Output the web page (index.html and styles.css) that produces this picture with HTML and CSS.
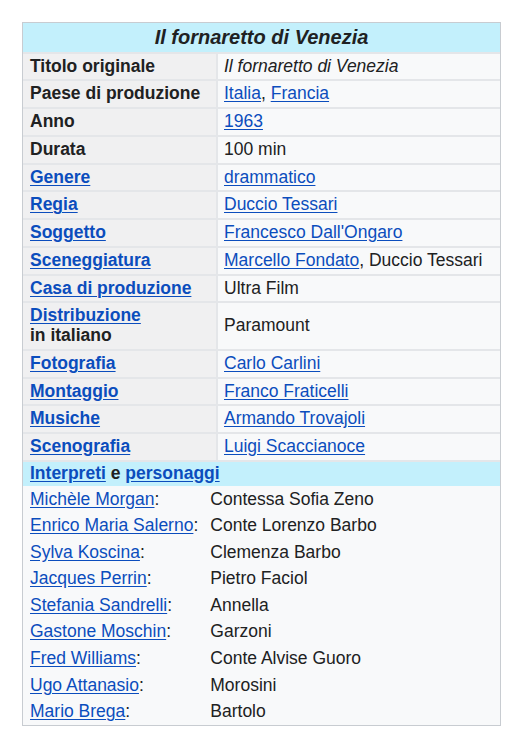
FILE: index.html
```html
<!DOCTYPE html>
<html lang="it">
<head>
<meta charset="utf-8">
<title>Il fornaretto di Venezia</title>
<link rel="stylesheet" href="styles.css">
</head>
<body>
<div class="page">
<table class="sinottico">
  <colgroup><col class="c-lab"><col class="c-val"></colgroup>
  <tr class="testata"><th colspan="2">Il fornaretto di Venezia</th></tr>
  <tr><th class="lab">Titolo originale</th><td class="val"><i>Il fornaretto di Venezia</i></td></tr>
  <tr><th class="lab">Paese di produzione</th><td class="val"><a href="#">Italia</a>, <a href="#">Francia</a></td></tr>
  <tr><th class="lab">Anno</th><td class="val"><a href="#">1963</a></td></tr>
  <tr><th class="lab">Durata</th><td class="val">100 min</td></tr>
  <tr><th class="lab"><a href="#">Genere</a></th><td class="val"><a href="#">drammatico</a></td></tr>
  <tr><th class="lab"><a href="#">Regia</a></th><td class="val"><a href="#">Duccio Tessari</a></td></tr>
  <tr><th class="lab"><a href="#">Soggetto</a></th><td class="val"><a href="#">Francesco Dall'Ongaro</a></td></tr>
  <tr><th class="lab"><a href="#">Sceneggiatura</a></th><td class="val"><a href="#">Marcello Fondato</a>, Duccio Tessari</td></tr>
  <tr><th class="lab"><a href="#">Casa di produzione</a></th><td class="val">Ultra Film</td></tr>
  <tr><th class="lab"><a href="#">Distribuzione</a><br>in italiano</th><td class="val">Paramount</td></tr>
  <tr><th class="lab"><a href="#">Fotografia</a></th><td class="val"><a href="#">Carlo Carlini</a></td></tr>
  <tr><th class="lab"><a href="#">Montaggio</a></th><td class="val"><a href="#">Franco Fraticelli</a></td></tr>
  <tr><th class="lab"><a href="#">Musiche</a></th><td class="val"><a href="#">Armando Trovajoli</a></td></tr>
  <tr><th class="lab"><a href="#">Scenografia</a></th><td class="val"><a href="#">Luigi Scaccianoce</a></td></tr>
  <tr class="sezione"><th colspan="2"><a href="#">Interpreti</a> e <a href="#">personaggi</a></th></tr>
  <tr>
    <td colspan="2" class="cast-cell">
      <div class="cast">
        <span><a href="#">Michèle Morgan</a>:</span><span>Contessa Sofia Zeno</span>
        <span><a href="#">Enrico Maria Salerno</a>:</span><span>Conte Lorenzo Barbo</span>
        <span><a href="#">Sylva Koscina</a>:</span><span>Clemenza Barbo</span>
        <span><a href="#">Jacques Perrin</a>:</span><span>Pietro Faciol</span>
        <span><a href="#">Stefania Sandrelli</a>:</span><span>Annella</span>
        <span><a href="#">Gastone Moschin</a>:</span><span>Garzoni</span>
        <span><a href="#">Fred Williams</a>:</span><span>Conte Alvise Guoro</span>
        <span><a href="#">Ugo Attanasio</a>:</span><span>Morosini</span>
        <span><a href="#">Mario Brega</a>:</span><span>Bartolo</span>
      </div>
    </td>
  </tr>
</table>
</div>
</body>
</html>
```

FILE: styles.css
```css
html, body {
  margin: 0;
  padding: 0;
  background: #ffffff;
}

body {
  font-family: "Liberation Sans", Arial, sans-serif;
  font-size: 17.5px;
  color: #202122;
}

.page {
  padding: 22px;
}

a {
  color: #0b4dbd;
  text-decoration: underline;
  text-underline-offset: 2px;
}

.sinottico {
  width: 479px;
  table-layout: fixed;
  border: 1px solid #c8ccd1;
  border-collapse: separate;
  border-spacing: 0;
  background: #f8f9fa;
}

.c-lab {
  width: 195px;
}

.sinottico th,
.sinottico td {
  line-height: 19.75px;
  vertical-align: middle;
}

.testata th {
  background: #c3f0fc;
  font-size: 20px;
  font-style: italic;
  font-weight: bold;
  text-align: center;
  line-height: 23px;
  padding: 3px 6px 2.5px;
  border-bottom: 2px solid #e4e6e9;
}

.lab {
  background: #f0f0f1;
  font-weight: bold;
  text-align: left;
  padding: 3px 7px;
  border-right: 2px solid #e4e6e9;
  border-bottom: 2px solid #e4e6e9;
}

.val {
  background: #f8f9fa;
  text-align: left;
  padding: 3px 6px;
  border-bottom: 2px solid #e4e6e9;
  white-space: nowrap;
}

.sezione th {
  background: #c3f0fc;
  font-weight: bold;
  text-align: left;
  padding: 2px 7px;
}

.cast-cell {
  padding: 0 7px;
  background: #f8f9fa;
}

.cast {
  display: grid;
  grid-template-columns: auto 1fr;
  column-gap: 12px;
  line-height: 26.6px;
}
```
